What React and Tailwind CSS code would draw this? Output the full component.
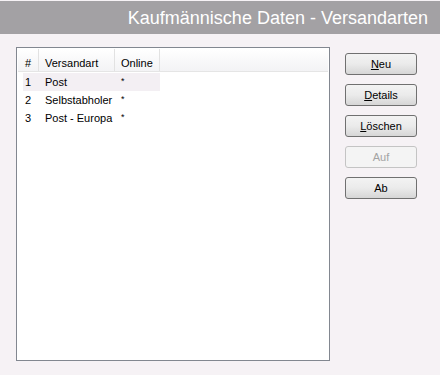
const rows = [
  { id: 1, name: "Post", online: "*" },
  { id: 2, name: "Selbstabholer", online: "*" },
  { id: 3, name: "Post - Europa", online: "*" },
];

const buttons = [
  { label: "Neu", key: "N" },
  { label: "Details", key: "D" },
  { label: "Löschen", key: "L" },
  { label: "Auf", disabled: true },
  { label: "Ab" },
];

const Btn = ({ label, k, disabled }) => {
  const rest = k ? label.slice(1) : label;
  return (
    <button
      disabled={disabled}
      className={`w-[72px] h-[22px] rounded-[3px] border text-[11px] leading-none flex items-center justify-center ${
        disabled
          ? "border-[#c4c4c4] bg-[#f4f4f4] text-[#a3a3a3]"
          : "border-[#707070] bg-gradient-to-b from-[#f3f3f3] via-[#ebebeb] to-[#d6d6d6] text-black"
      }`}
    >
      {k && <span className="underline">{k}</span>}
      {rest}
    </button>
  );
};

export default function App() {
  return (
    <div
      className="w-[440px] h-[375px] bg-[#f6f2f5] flex flex-col"
      style={{ fontFamily: '"Liberation Sans", Arial, sans-serif' }}
    >
      <div className="mt-px h-[33px] bg-[#a3a1a4] flex items-center justify-end pr-3">
        <span className="text-white text-[18px] leading-none">Kaufmännische Daten - Versandarten</span>
      </div>

      <div className="flex pt-[13px]">
        {/* List */}
        <div className="ml-4 w-[314px] h-[314px] border border-[#828790] bg-white px-px pt-px">
          <div className="flex h-[23px] text-[11px] bg-gradient-to-b from-white to-[#f3f3f5] border-b border-[#e5e5e5]">
            <div className="w-[21px] pl-[7px] pt-[6px] border-r border-[#e2e2e2]">#</div>
            <div className="w-[76px] pl-[6px] pt-[6px] border-r border-[#e2e2e2]">Versandart</div>
            <div className="w-[45px] pl-[6px] pt-[6px] border-r border-[#e2e2e2]">Online</div>
            <div className="flex-1"></div>
          </div>
          <div className="pt-px">
            {rows.map((r, i) => (
              <div
                key={r.id}
                className={`flex h-[18px] items-center text-[11px] ml-[5px] w-[137px] ${
                  i === 0 ? "bg-[#f3eff3]" : ""
                }`}
              >
                <div className="w-[16px] pl-[2px]">{r.id}</div>
                <div className="w-[76px] pl-[6px] whitespace-nowrap">{r.name}</div>
                <div className="w-[45px] pl-[6px] text-[9px] self-start pt-[2px]">{r.online}</div>
              </div>
            ))}
          </div>
        </div>

        {/* Buttons */}
        <div className="ml-[15px] pt-[6px] flex flex-col gap-[9px]">
          {buttons.map((b) => (
            <Btn key={b.label} label={b.label} k={b.key} disabled={b.disabled} />
          ))}
        </div>
      </div>
    </div>
  );
}
